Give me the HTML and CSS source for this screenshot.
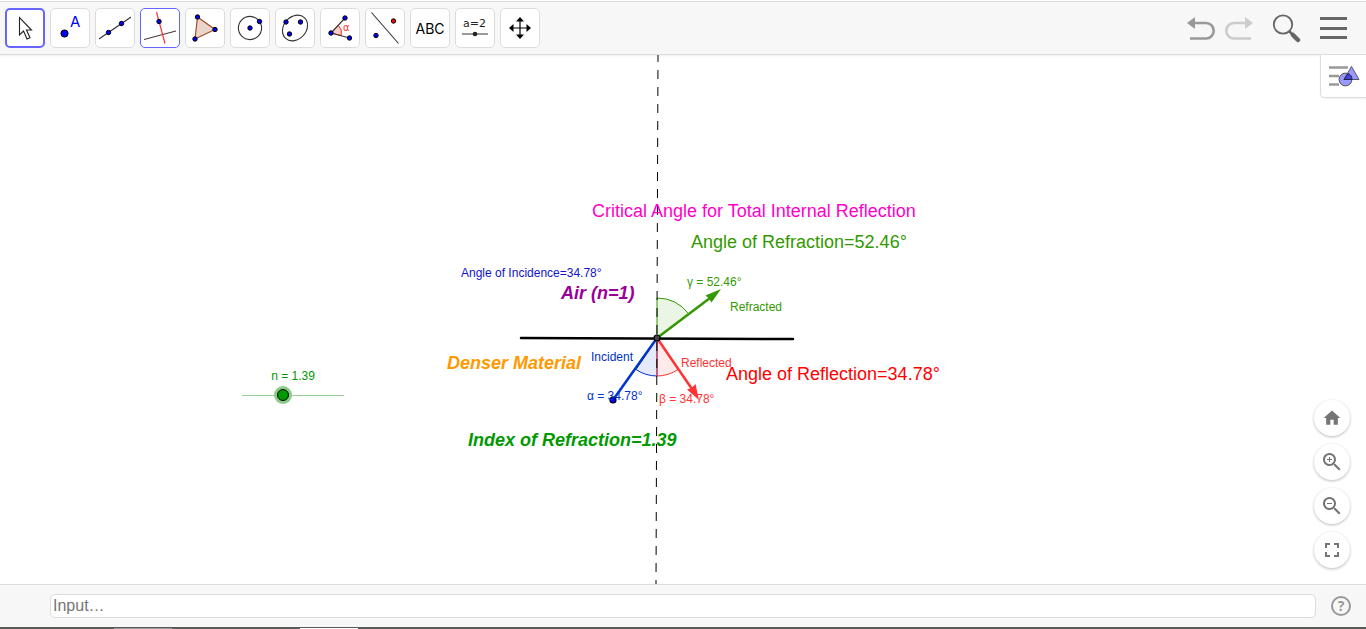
FILE: index.html
```html
<!DOCTYPE html>
<html lang="en">
<head>
<meta charset="utf-8">
<title>Critical Angle for Total Internal Reflection</title>
<link rel="stylesheet" href="styles.css">
</head>
<body>
<header class="toolbar">
  <nav class="tools" aria-label="Tools">
    <button class="tool selected" aria-label="Move"><svg viewBox="0 0 32 32"><path d="M10.500 5.500v17.500l4-4 3.500 8 3-1.300-3.500-7.700h5z" fill="#fff" stroke="#222" stroke-width="1.100"/></svg></button>
    <button class="tool" aria-label="Point"><svg viewBox="0 0 32 32"><circle class="dot" cx="10.500" cy="21.500" r="3.600"/><text x="16" y="15" class="letter">A</text></svg></button>
    <button class="tool" aria-label="Line"><svg viewBox="0 0 32 32"><path class="thin" d="M0 27L32 5"/><circle class="dot" cx="9.500" cy="20.500" r="2.200"/><circle class="dot" cx="22.500" cy="11.500" r="2.200"/></svg></button>
    <button class="tool active" aria-label="Perpendicular line"><svg viewBox="0 0 32 32"><path d="M0 27.500L32 19" stroke="#433" stroke-width="1.100"/><path d="M12.500 0L21 31.500" stroke="#f33" stroke-width="1.200"/><circle class="dot" cx="15" cy="9.500" r="2.200"/></svg></button>
    <button class="tool" aria-label="Polygon"><svg viewBox="0 0 32 32"><path d="M8.500 5L26 17.500L6 27z" fill="#ead5cb" stroke="#a64b2a" stroke-width="1.200"/><circle class="dot" cx="8.500" cy="5" r="2.200"/><circle class="dot" cx="26" cy="17.500" r="2.200"/><circle class="dot" cx="6" cy="27" r="2.200"/></svg></button>
    <button class="tool" aria-label="Circle"><svg viewBox="0 0 32 32"><circle class="thin" cx="16" cy="16" r="11.600"/><circle class="dot" cx="16" cy="16" r="2.200"/><circle class="dot" cx="25.500" cy="9.500" r="2.200"/></svg></button>
    <button class="tool" aria-label="Ellipse"><svg viewBox="0 0 32 32"><ellipse class="thin" cx="16" cy="16" rx="14" ry="11.200" transform="rotate(-48 16 16)"/><circle class="dot" cx="7" cy="10" r="2.200"/><circle class="dot" cx="21.500" cy="10" r="2.200"/><circle class="dot" cx="10.500" cy="22" r="2.200"/></svg></button>
    <button class="tool" aria-label="Angle"><svg viewBox="0 0 32 32"><path d="M7 21l7.500-7.500a10.500 10.500 0 0 1 2.700 10z" fill="#fcc" stroke="#e33" stroke-width="1"/><path class="thin" d="M21 6L7 21l18.500 5"/><circle class="dot" cx="21" cy="6" r="2.200"/><circle class="dot" cx="7" cy="21" r="2.200"/><circle class="dot" cx="25.500" cy="26" r="2.200"/><text x="19" y="19" class="alpha">α</text></svg></button>
    <button class="tool" aria-label="Reflect about line"><svg viewBox="0 0 32 32"><path class="thin" d="M2.500 0.500L29.500 31.500"/><circle class="dot" cx="7" cy="23.500" r="2.200"/><circle class="dot reddot" cx="24.500" cy="9" r="2.200"/></svg></button>
    <button class="tool word" aria-label="Text">ABC</button>
    <button class="tool" aria-label="Slider"><svg viewBox="0 0 32 32"><text x="4" y="15" class="small">a=2</text><path d="M3 22h26" stroke="#555" stroke-width="1.200"/><circle cx="16" cy="22" r="2.300" fill="#222"/></svg></button>
    <button class="tool" aria-label="Move graphics view"><svg viewBox="0 0 32 32"><path d="M8 16h16M16 8v16" stroke="#000" stroke-width="1.200"/><path d="M16 5l4 4.500h-8zM16 27l4-4.500h-8zM5 16l4.500-4v8zM27 16l-4.500-4v8z"/></svg></button>
  </nav>
  <div class="actions">
    <button class="action" aria-label="Undo"><svg width="30" height="26" viewBox="0 0 30 26"><path d="M7 8h12a7.500 7.500 0 0 1 0 15.500H3" fill="none" stroke="#999" stroke-width="2.600"/><path d="M0 8l8-6v12z" fill="#999"/></svg></button>
    <button class="action redo" aria-label="Redo"><svg width="30" height="26" viewBox="0 0 30 26"><path d="M22 8H10a7.500 7.500 0 0 0 0 15.500h17" fill="none" stroke="#ccc" stroke-width="2.600"/><path d="M29 8l-8-6v12z" fill="#ccc"/></svg></button>
    <button class="action search" aria-label="Search"><svg width="30" height="30" viewBox="0 0 30 30"><circle cx="11" cy="11.500" r="9.200" fill="none" stroke="#666" stroke-width="1.800"/><path d="M17 18l4 4" stroke="#666" stroke-width="2.500"/><path d="M21 22l5 5" stroke="#666" stroke-width="4.500" stroke-linecap="round"/></svg></button>
    <button class="action" aria-label="Menu"><svg width="27" height="24" viewBox="0 0 27 24"><path d="M0 2.500h27M0 12.500h27M0 21.500h27" stroke="#666" stroke-width="3"/></svg></button>
  </div>
</header>

<main class="view">
  <svg class="drawing" role="img" aria-label="Refraction and reflection of a light ray">
    <path d="M657 283V243A40 40 0 0 1 688.500 258.700z" class="arc green"/>
    <path d="M657 283V321A38 38 0 0 1 636 314.500z" class="arc blue"/>
    <path d="M657 283V321A38 38 0 0 0 678 314.500z" class="arc red"/>
    <path d="M658 0L656 529" class="normal"/>
    <path d="M521 283L793 284" class="surface"/>
    <path d="M657 283L613 345" class="ray" stroke="#03c"/>
    <path d="M657 283L710 243" class="ray" stroke="#390"/>
    <path d="M721 234L711.500 247.500L709 243.500L705.500 240.500z" fill="#390"/>
    <path d="M657 283L692 334" class="ray" stroke="#f33"/>
    <path d="M699 345L687 334.500L691.500 333L695.500 329z" fill="#f33"/>
    <circle cx="657" cy="283" r="3" fill="#444" stroke="#000" stroke-width="1.200"/>
    <circle cx="613" cy="345" r="3" fill="#00f" stroke="#000" stroke-width="1.200"/>
    <g class="large">
      <text x="592" y="162" fill="#ff00c8">Critical Angle for Total Internal Reflection</text>
      <text x="691" y="193" fill="#390">Angle of Refraction=52.46°</text>
      <text x="726" y="325" fill="#f00">Angle of Reflection=34.78°</text>
    </g>
    <g class="large strong">
      <text x="561" y="244" fill="#909">Air (n=1)</text>
      <text x="447" y="314" fill="#f90">Denser Material</text>
      <text x="468" y="391" fill="#090">Index of Refraction=1.39</text>
    </g>
    <g class="label">
      <text x="461" y="222" fill="#11c">Angle of Incidence=34.78°</text>
      <text x="687" y="231" fill="#390">γ = 52.46°</text>
      <text x="730" y="256" fill="#390">Refracted</text>
      <text x="591" y="306" fill="#03c">Incident</text>
      <text x="681" y="312" fill="#f33">Reflected</text>
      <text x="587" y="345" fill="#03c">α = 34.78°</text>
      <text x="659" y="348" fill="#f33">β = 34.78°</text>
    </g>
  </svg>
  <div class="slider">
    <label for="n">n = 1.39</label>
    <input id="n" type="range" min="1" max="2" step="0.01" value="1.39">
  </div>
  <button class="stylebar" aria-label="Style bar"><svg width="32" height="24" viewBox="0 0 32 24"><path d="M1 2.500h19M1 11h10M1 19.500h10" stroke="#999" stroke-width="2.600"/><circle cx="17.500" cy="14.500" r="6.400" fill="#99f" stroke="#555"/><path d="M23.500 1.500l7.500 13H16z" fill="#88f" fill-opacity="0.850" stroke="#556"/><path d="M16 14.500l4-6a6.400 6.400 0 0 1 4 6z" fill="#44d" stroke="#224"/></svg></button>
  <div class="zoombar">
    <button class="round" aria-label="Standard view"><svg viewBox="0 0 24 24"><path d="M10 20v-6h4v6h5v-8h3L12 3 2 12h3v8z"/></svg></button>
    <button class="round big" aria-label="Zoom in"><svg viewBox="0 0 24 24"><path d="M15.500 14h-.8l-.3-.3A6.500 6.500 0 1 0 13.700 14.400l.3.300v.8l5 5 1.500-1.500zm-6 0a4.500 4.500 0 1 1 0-9 4.500 4.500 0 0 1 0 9zM10 7H9v2H7v1h2v2h1v-2h2V9h-2z"/></svg></button>
    <button class="round big" aria-label="Zoom out"><svg viewBox="0 0 24 24"><path d="M15.500 14h-.8l-.3-.3A6.500 6.500 0 1 0 13.700 14.400l.3.300v.8l5 5 1.500-1.500zm-6 0a4.500 4.500 0 1 1 0-9 4.500 4.500 0 0 1 0 9zM7 9h5v1H7z"/></svg></button>
    <button class="round big" aria-label="Fullscreen"><svg viewBox="0 0 24 24"><path d="M7 14H5v5h5v-2H7zM5 10h2V7h3V5H5zm12 7h-3v2h5v-5h-2zM14 5v2h3v3h2V5z"/></svg></button>
  </div>
</main>

<footer class="inputbar">
  <input class="entry" type="text" placeholder="Input…" aria-label="Input">
  <button class="help" aria-label="Help">?</button>
</footer>
<div class="edge"><span class="tab grey"></span><span class="tab white"></span></div>
</body>
</html>
```

FILE: styles.css
```css
* { box-sizing: border-box; }

body {
  margin: 0;
  height: 100vh;
  display: flex;
  flex-direction: column;
  overflow: hidden;
  background: #fff;
  font-family: "Liberation Sans", Arial, sans-serif;
}

button {
  padding: 0;
  border: 0;
  background: none;
  font-family: inherit;
  cursor: pointer;
}

svg { display: block; }

.toolbar {
  display: flex;
  justify-content: space-between;
  align-items: center;
  margin-top: 1px;
  padding: 6px 19px 6px 5px;
  background: #f7f7f7;
  border-top: 1px solid #dcdcdc;
  border-bottom: 1px solid #dcdcdc;
  box-shadow: 0 1px 2px #eee;
}

.tools { display: flex; gap: 5px; }

.tool {
  width: 40px;
  height: 40px;
  display: flex;
  align-items: center;
  justify-content: center;
  background: #fff;
  border: 1px solid #dcdcdc;
  border-radius: 5px;
}

.tool svg { width: 32px; height: 32px; flex: none; }
.tool.selected { border: 2px solid #66f; }
.tool.active { border-color: #66f; }
.word { font: 14px Inter, sans-serif; color: #000; }
.dot { fill: #00f; stroke: #000; stroke-width: 1; }
.reddot { fill: #f00; }
.thin { fill: none; stroke: #333; stroke-width: 1.1; }
.letter { font: 15px Inter, sans-serif; fill: #00f; }
.alpha { font: 10px "DejaVu Sans", sans-serif; fill: #f33; }
.small { font: 11px "DejaVu Sans", sans-serif; fill: #222; }

.actions { display: flex; align-items: center; gap: 18px; }
.redo { margin-left: -11px; }

.view { position: relative; flex: 1; min-height: 0; }
.drawing { width: 100%; height: 100%; }
.arc { stroke-width: 1; fill-opacity: 0.1; }
.green { fill: #390; stroke: #390; }
.blue { fill: #03c; stroke: #03c; }
.red { fill: #f33; stroke: #f33; }
.normal { stroke: #000; stroke-width: 1; stroke-dasharray: 9 8; stroke-dashoffset: 2; }
.surface { stroke: #000; stroke-width: 2.5; stroke-linecap: round; }
.ray { stroke-width: 2.5; }
.large { font-size: 18px; }
.strong { font-weight: bold; font-style: italic; }
.label { font-size: 12px; }

.slider {
  position: absolute;
  left: 242px;
  top: 313px;
  width: 102px;
  display: flex;
  flex-direction: column;
  align-items: center;
  color: #090;
  font-size: 12px;
  line-height: 16px;
}

.slider input {
  width: 100%;
  height: 22px;
  margin: 0;
  appearance: none;
  background: linear-gradient(#99cf99, #99cf99) center / 100% 1px no-repeat;
}

.slider input::-webkit-slider-thumb {
  appearance: none;
  width: 12px;
  height: 12px;
  border: 1px solid #000;
  border-radius: 50%;
  background: #090;
  box-shadow: 0 0 0 3px #8c8;
}

.stylebar {
  position: absolute;
  top: 0;
  right: 0;
  padding: 10px 6px 8px 7px;
  background: #fff;
  border: solid #dcdcdc;
  border-width: 0 0 1px 1px;
  border-radius: 0 0 0 5px;
  box-shadow: 0 1px 2px #eee;
}

.zoombar {
  position: absolute;
  right: 16px;
  bottom: 16px;
  display: flex;
  flex-direction: column;
  gap: 8px;
}

.round {
  width: 36px;
  height: 36px;
  display: flex;
  align-items: center;
  justify-content: center;
  border-radius: 50%;
  background: #fff;
  box-shadow: 0 1px 3px #bbb;
}

.round svg { width: 20px; height: 20px; fill: #757575; }
.round.big svg { width: 24px; height: 24px; }

.inputbar {
  display: flex;
  align-items: center;
  gap: 15px;
  padding: 9px 15px 9px 50px;
  background: #f7f7f7;
  border-top: 1px solid #dcdcdc;
}

.entry {
  flex: 1;
  height: 24px;
  padding: 0 2px;
  border: 1px solid #dcdcdc;
  border-radius: 5px;
  background: #fff;
  font: 16px "Liberation Sans", Arial, sans-serif;
}

.entry::placeholder { color: #757575; }

.help {
  width: 20px;
  height: 20px;
  border: 2px solid #999;
  border-radius: 50%;
  color: #999;
  font: bold 14px/16px "Open Sans", sans-serif;
}

.edge {
  display: flex;
  gap: 128px;
  height: 2px;
  padding-left: 114px;
  background: #565b58;
}

.tab { width: 58px; height: 1px; margin-top: 1px; }
.grey { background: #999; }
.white { background: #fff; }
```
